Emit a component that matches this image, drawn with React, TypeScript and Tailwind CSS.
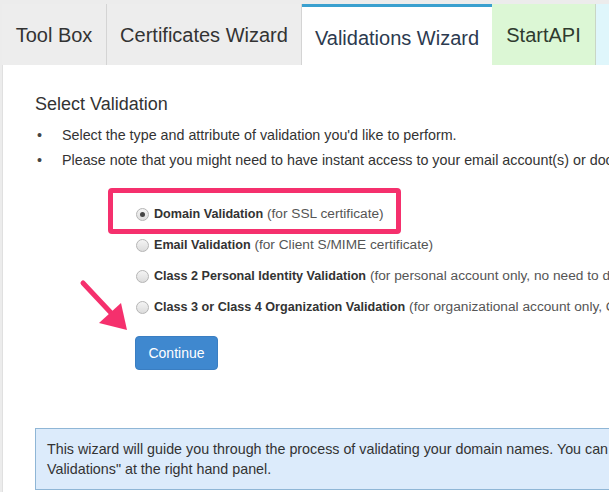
import React from 'react'

function Radio({ checked }: { checked?: boolean }) {
  return (
    <span className="flex h-[13px] w-[13px] shrink-0 items-center justify-center rounded-full border border-[#b5b5b5] bg-gradient-to-b from-[#f4f4f4] to-[#dcdcdc]">
      {checked && <span className="h-[5px] w-[5px] rounded-full bg-[#444]" />}
    </span>
  )
}

const options = [
  { bold: 'Domain Validation', rest: ' (for SSL certificate)', checked: true },
  { bold: 'Email Validation', rest: ' (for Client S/MIME certificate)' },
  { bold: 'Class 2 Personal Identity Validation', rest: ' (for personal account only, no need to do it for organization)' },
  { bold: 'Class 3 or Class 4 Organization Validation', rest: ' (for organizational account only, Class 3 for company)' },
]

export default function App() {
  return (
    <div className="relative h-[492px] w-[609px] overflow-hidden bg-[#ececec] font-['Liberation_Sans',Arial,sans-serif]">
      {/* tab strip */}
      <div className="flex h-[65px] whitespace-nowrap pl-[2px] pt-[4px] text-[20px]">
        <div className="flex w-[105px] shrink-0 items-center justify-center border-r border-[#d4d4d4] bg-[#ededed] text-[#333]">
          Tool Box
        </div>
        <div className="flex w-[195px] shrink-0 items-center justify-center border-r border-[#d4d4d4] bg-[#ededed] text-[#333]">
          Certificates Wizard
        </div>
        <div className="flex w-[190px] shrink-0 items-center justify-center border-t-[3px] border-[#3aa0cf] bg-white pt-[4px] text-[#2c3a4f]">
          Validations Wizard
        </div>
        <div className="flex w-[104px] shrink-0 items-center justify-center border-r border-[#c9d6c5] bg-[#dcf7d5] text-[#2f3b2f]">
          StartAPI
        </div>
        <div className="flex-1 bg-[#dff6fb]" />
      </div>

      {/* content */}
      <div className="ml-[2px] h-[427px] border-l border-[#e0e0e0] bg-white pl-[32px] pt-[28px] text-[#333]">
        <h2 className="text-[18px] leading-[22px] text-[#333]">Select Validation</h2>
        <ul className="mt-[8px] w-[800px] text-[14.3px] leading-[25px] text-[#333]">
          <li className="flex">
            <span className="w-[27px] pl-[2px] text-[#444]">•</span>
            <span>Select the type and attribute of validation you'd like to perform.</span>
          </li>
          <li className="flex">
            <span className="w-[27px] pl-[2px] text-[#444]">•</span>
            <span>Please note that you might need to have instant access to your email account(s) or documents for verification.</span>
          </li>
        </ul>

        <div className="mt-[32px] flex w-[900px] flex-col gap-[12px] pl-[101px]">
          {options.map((o) => (
            <div key={o.bold} className="flex h-[19px] items-center gap-[5px] whitespace-nowrap text-[13.7px] text-[#555]">
              <Radio checked={o.checked} />
              <span>
                <b className="text-[12.6px] font-bold text-[#333]">{o.bold}</b>
                {o.rest}
              </span>
            </div>
          ))}
        </div>

        <button className="ml-[100px] mt-[19px] h-[34px] w-[83px] rounded-[4px] border border-[#3a7ec2] bg-[#3f88cf] text-[14px] text-white">
          Continue
        </button>

        <div className="mt-[58px] w-[800px] border border-[#8fb6d6] bg-[#dcebfb] px-[11px] pt-[10px] pb-[10px] text-[14.3px] leading-[20px] text-[#333]">
          This wizard will guide you through the process of validating your domain names. You can also view all
          <br />
          Validations" at the right hand panel.
        </div>
      </div>

      {/* pink highlight box */}
      <div className="absolute left-[108px] top-[188px] h-[46px] w-[293px] rounded-[4px] border-[5px] border-[#f5306d]" />

      {/* pink arrow */}
      <svg className="absolute left-[78px] top-[278px]" width="56" height="58" viewBox="0 0 56 58">
        <path d="M5 5 L36 38" stroke="#f5306d" strokeWidth="5" strokeLinecap="round" />
        <path d="M49 52 L21 45 L43 25 Z" fill="#f5306d" />
      </svg>
    </div>
  )
}
